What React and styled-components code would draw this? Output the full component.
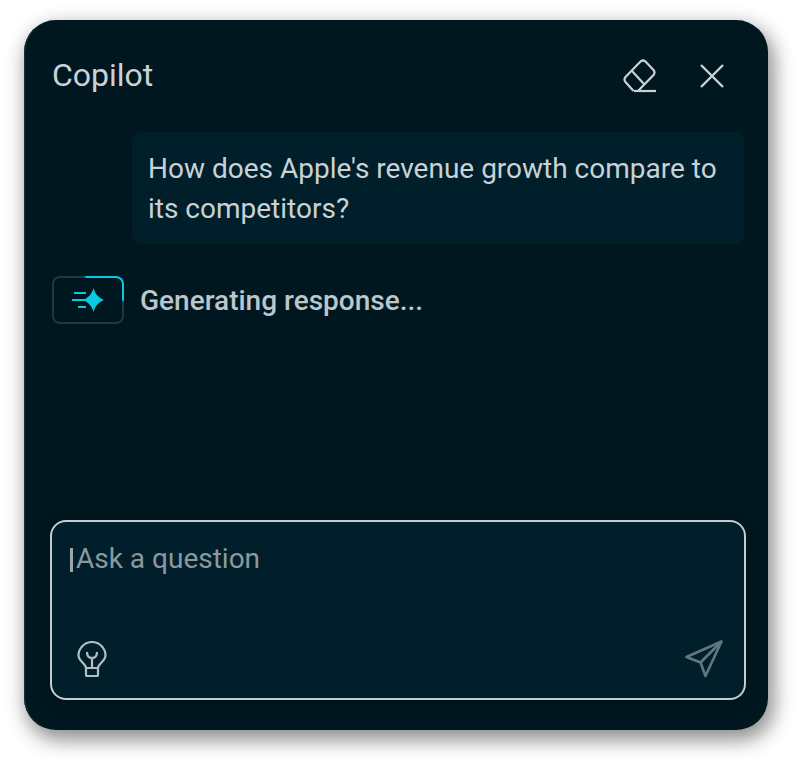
import React from 'react';
import styled, { createGlobalStyle } from 'styled-components';

const GlobalStyle = createGlobalStyle`
  html, body {
    margin: 0;
    padding: 0;
    background: #ffffff;
    font-family: Roboto, "Liberation Sans", sans-serif;
  }
`;

const Page = styled.div`
  width: 804px;
  height: 770px;
  box-sizing: border-box;
  padding: 20px 36px 40px 24px;
`;

const Panel = styled.div`
  width: 744px;
  height: 710px;
  box-sizing: border-box;
  padding: 32px 22px 30px 26px;
  border-radius: 32px;
  background: #00171f;
  box-shadow: inset 2px 0 2px -1px #14384a, 4px 8px 20px 2px rgba(0, 0, 0, 0.45);
  display: flex;
  flex-direction: column;
`;

const Header = styled.div`
  height: 48px;
  display: flex;
  align-items: center;
  justify-content: space-between;
  padding: 0 10px 0 2px;
`;

const Title = styled.div`
  font-size: 32px;
  line-height: 46px;
  height: 48px;
  color: #c9d2d6;
`;

const Actions = styled.div`
  display: flex;
  align-items: center;
  gap: 24px;
`;

const IconButton = styled.button`
  width: 48px;
  height: 48px;
  padding: 0;
  border: none;
  background: none;
  color: #c9d2d6;
  display: flex;
  align-items: center;
  justify-content: center;
`;

const Messages = styled.div`
  flex: 1;
  padding-top: 32px;
  display: flex;
  flex-direction: column;
  gap: 32px;
`;

const UserBubble = styled.div`
  align-self: flex-end;
  width: 612px;
  margin-right: 2px;
  box-sizing: border-box;
  padding: 17px 16px 15px;
  border-radius: 8px;
  background: #001f2b;
  color: #c9d2d6;
  font-size: 28px;
  line-height: 40px;
`;

const StatusRow = styled.div`
  display: flex;
  align-items: center;
  gap: 16px;
  padding-left: 2px;
`;

const StatusBadge = styled.div`
  width: 72px;
  height: 48px;
  box-sizing: border-box;
  border-radius: 8px;
  display: flex;
  align-items: center;
  justify-content: center;
  padding: 2px;
  background: conic-gradient(from 0deg at 50% 50%, #08c8e2 0deg, #08c8e2 90deg, #1a3a45 93deg, #1a3a45 350deg, #08c8e2 356deg);
`;

const BadgeInner = styled.div`
  width: 100%;
  height: 100%;
  border-radius: 6px;
  background: #00171f;
  display: flex;
  align-items: center;
  justify-content: center;
`;

const StatusText = styled.div`
  color: #bcc6cb;
  font-size: 28px;
  font-weight: 500;
  line-height: 50px;
  height: 48px;
`;

const Composer = styled.div`
  height: 180px;
  box-sizing: border-box;
  width: 696px;
  border: 2px solid #c3ccd0;
  border-radius: 16px;
  background: #001f2b;
  box-shadow: 0 4px 14px rgba(0, 0, 0, 0.25);
  padding: 17px 21px 20px 18px;
  display: flex;
  flex-direction: column;
  justify-content: space-between;
`;

const Placeholder = styled.div`
  color: #8b999f;
  font-size: 28px;
  line-height: 40px;
  display: flex;
  align-items: center;
`;

const Caret = styled.span`
  width: 3px;
  height: 24px;
  margin-right: 3px;
  margin-top: 2px;
  background: #9aa7ad;
`;

const ComposerFooter = styled.div`
  display: flex;
  align-items: center;
  justify-content: space-between;
  padding-left: 7px;
`;

const EraserIcon = () => (
  <svg width="34" height="34" viewBox="0 0 34 34" fill="none" stroke="currentColor" strokeWidth="2.2">
    <path d="M10.5 32 L2.5 23 Q0.5 20.5 2.5 18 L17.5 2.5 Q20 0.5 22.5 2.5 L30.5 11 Q32.5 13.5 30.5 16 L15 32" />
    <path d="M9 12 L21 25" />
    <path d="M11 32 H33" />
  </svg>
);

const CloseIcon = () => (
  <svg width="24" height="24" viewBox="0 0 24 24" fill="none" stroke="currentColor" strokeWidth="2.4">
    <path d="M1 1 L23 23 M23 1 L1 23" />
  </svg>
);

const SparkIcon = () => (
  <svg width="32" height="24" viewBox="0 0 32 24" fill="#08c8e2">
    <path d="M21.5 0 C23 5.5 26 9.5 32 12 C26 14.5 23 18.5 21.5 24 C20 18.5 17 14.5 11 12 C17 9.5 20 5.5 21.5 0 Z" />
    <path d="M2 4 H14 V6 H2 Z M0 11 H13 V13 H0 Z M6 18 H14 V20 H6 Z" />
  </svg>
);

const BulbIcon = () => (
  <svg width="30" height="36" viewBox="0 0 30 36" fill="none" stroke="#b3bec3" strokeWidth="2.2" strokeLinejoin="round">
    <path d="M9 27 C9 23 1.5 20 1.5 14.5 a13.5 13.5 0 0 1 27 0 C28.5 20 21 23 21 27 Z" />
    <path d="M9 27 H21 V34 a1 1 0 0 1 -1 1 H10 a1 1 0 0 1 -1 -1 Z" />
    <path d="M15 27 V17 M10 11 C10 15 12 17 15 17 C18 17 20 15 20 11" />
  </svg>
);

const SendIcon = () => (
  <svg width="38" height="38" viewBox="0 0 38 38" fill="none" stroke="#64767d" strokeWidth="2.6" strokeLinejoin="round">
    <path d="M36.5 1.5 L1.5 17 L15.5 22.5 L20.5 36 Z" />
    <path d="M36.5 1.5 L15.5 22.5" />
  </svg>
);

export default function App() {
  return (
    <Page>
      <GlobalStyle />
      <Panel>
        <Header>
          <Title>Copilot</Title>
          <Actions>
            <IconButton><EraserIcon /></IconButton>
            <IconButton><CloseIcon /></IconButton>
          </Actions>
        </Header>
        <Messages>
          <UserBubble>How does Apple's revenue growth compare to its competitors?</UserBubble>
          <StatusRow>
            <StatusBadge>
              <BadgeInner><SparkIcon /></BadgeInner>
            </StatusBadge>
            <StatusText>Generating response...</StatusText>
          </StatusRow>
        </Messages>
        <Composer>
          <Placeholder><Caret />Ask a question</Placeholder>
          <ComposerFooter>
            <BulbIcon />
            <SendIcon />
          </ComposerFooter>
        </Composer>
      </Panel>
    </Page>
  );
}
